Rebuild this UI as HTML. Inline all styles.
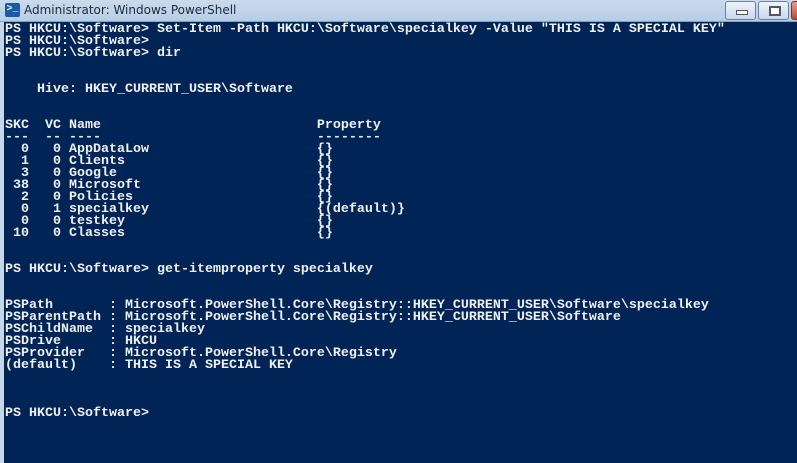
<!DOCTYPE html>
<html><head><style>
html,body{margin:0;padding:0;width:797px;height:463px;overflow:hidden;background:#012456;}
#title{position:absolute;left:0;top:0;width:797px;height:21px;background:linear-gradient(#c9dcee,#b5cde6);border-bottom:1px solid #8aa3bd;}
#title .t{position:absolute;left:24px;top:3px;font:12px "DejaVu Sans","Liberation Sans",sans-serif;color:#1e2a3a;}
#icon{position:absolute;left:5px;top:3px;width:15px;height:14px;background:#1a5aa8;border-radius:2px;color:#fff;font:bold 10px "Liberation Mono",monospace;line-height:14px;text-align:center;}
.btn{position:absolute;top:1px;height:17px;border:1px solid #6d829a;border-radius:3px;background:linear-gradient(#eef4fa,#c8d8ea);}
#lb{position:absolute;left:0;top:22px;width:4px;height:441px;background:#c6d7ea;}
pre{position:absolute;left:5px;top:24px;margin:0;font:bold 13.33px/12px "Liberation Mono",monospace;color:#eef0f2;letter-spacing:0;}
</style></head><body>
<div id="title"><div id="icon">&gt;_</div><div class="t">Administrator: Windows PowerShell</div>
<div class="btn" style="left:725px;width:29px"><div style="position:absolute;left:10px;top:8px;width:10px;height:3px;background:#fff;border:1px solid #556"></div></div>
<div class="btn" style="left:758px;width:29px"><div style="position:absolute;left:10px;top:4px;width:8px;height:6px;border:2px solid #556;background:#fff"></div></div>
<div class="btn" style="left:791px;width:20px;background:linear-gradient(#e8a090,#c4462e);border-color:#8a3020"></div>
</div>
<div id="lb"></div>
<pre>PS HKCU:\Software&gt; Set-Item -Path HKCU:\Software\specialkey -Value "THIS IS A SPECIAL KEY"
PS HKCU:\Software&gt;
PS HKCU:\Software&gt; dir


    Hive: HKEY_CURRENT_USER\Software


SKC  VC Name                           Property
---  -- ----                           --------
  0   0 AppDataLow                     {}
  1   0 Clients                        {}
  3   0 Google                         {}
 38   0 Microsoft                      {}
  2   0 Policies                       {}
  0   1 specialkey                     {(default)}
  0   0 testkey                        {}
 10   0 Classes                        {}


PS HKCU:\Software&gt; get-itemproperty specialkey


PSPath       : Microsoft.PowerShell.Core\Registry::HKEY_CURRENT_USER\Software\specialkey
PSParentPath : Microsoft.PowerShell.Core\Registry::HKEY_CURRENT_USER\Software
PSChildName  : specialkey
PSDrive      : HKCU
PSProvider   : Microsoft.PowerShell.Core\Registry
(default)    : THIS IS A SPECIAL KEY



PS HKCU:\Software&gt;</pre>
</body></html>
